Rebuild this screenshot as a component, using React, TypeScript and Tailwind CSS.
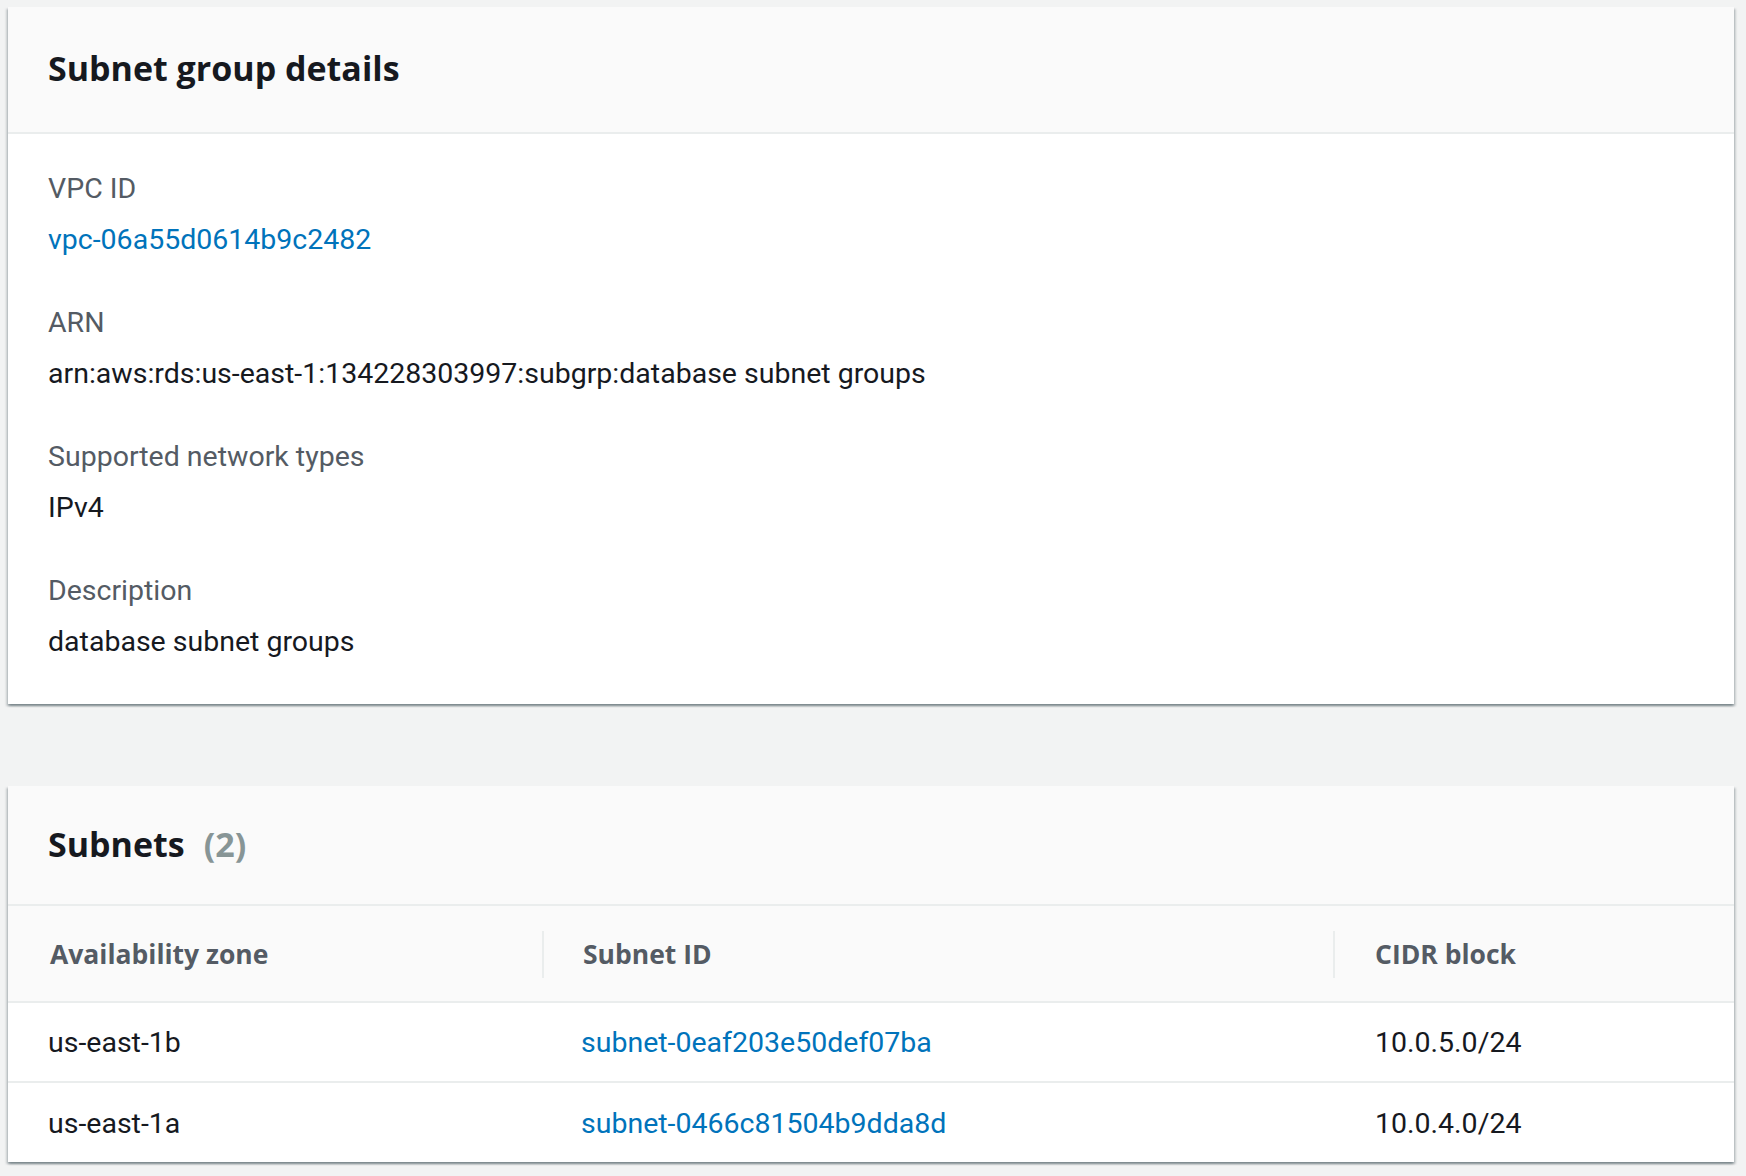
import React from "react";

const font = { fontFamily: "Roboto, 'Liberation Sans', sans-serif" };
const heading = { fontFamily: "'Open Sans', Roboto, sans-serif" };

const details = [
  { label: "VPC ID", value: "vpc-06a55d0614b9c2482", link: true },
  { label: "ARN", value: "arn:aws:rds:us-east-1:134228303997:subgrp:database subnet groups" },
  { label: "Supported network types", value: "IPv4" },
  { label: "Description", value: "database subnet groups" },
];

const subnets = [
  { zone: "us-east-1b", id: "subnet-0eaf203e50def07ba", cidr: "10.0.5.0/24" },
  { zone: "us-east-1a", id: "subnet-0466c81504b9dda8d", cidr: "10.0.4.0/24" },
];

const cardShadow =
  "shadow-[0_2px_2px_0_rgba(0,28,36,0.3),2px_2px_2px_0_rgba(0,28,36,0.15),-2px_2px_2px_0_rgba(0,28,36,0.15)]";

export default function App() {
  return (
    <div className="min-h-[1176px] bg-[#f2f3f3] pt-[7px] pl-[8px] pr-[12px]" style={font}>
      {/* details card */}
      <section className={`bg-white ${cardShadow}`}>
        <div className="bg-[#fafafa] border-b-2 border-[#eaeded] pl-[40px] pt-[41px] pb-[44px]">
          <h2 className="text-[34px] leading-[40px] font-bold text-[#16191f]" style={heading}>
            Subnet group details
          </h2>
        </div>
        <div className="pl-[40px] pt-[37px] pb-[44px] flex flex-col gap-[47px]">
          {details.map((d) => (
            <div key={d.label} className="flex flex-col gap-[15px]">
              <div className="text-[28.5px] leading-[36px] text-[#545b64]">{d.label}</div>
              <div className={`text-[28.5px] leading-[36px] ${d.link ? "text-[#0073bb]" : "text-[#16191f]"}`}>
                {d.value}
              </div>
            </div>
          ))}
        </div>
      </section>

      {/* subnets card */}
      <section className={`mt-[82px] bg-white ${cardShadow}`}>
        <div
          className="bg-[#fafafa] border-b-2 border-[#eaeded] pl-[40px] pt-[38px] pb-[40px] flex items-baseline gap-[19px]"
          style={heading}
        >
          <h2 className="text-[34px] leading-[40px] font-bold text-[#16191f]">Subnets</h2>
          <span className="text-[34px] leading-[40px] font-bold text-[#879596]">(2)</span>
        </div>

        <div
          className="grid grid-cols-[534px_791px_1fr] bg-[#fafafa] border-b-2 border-[#eaeded] h-[97px] pt-[2px] text-[26.5px] font-bold text-[#545b64]"
          style={heading}
        >
          <div className="flex items-center pl-[42px]">Availability zone</div>
          <div className="flex items-center">
            <span className="h-[47px] w-[2px] bg-[#eaeded]" />
            <span className="ml-[39px]">Subnet ID</span>
          </div>
          <div className="flex items-center">
            <span className="h-[47px] w-[2px] bg-[#eaeded]" />
            <span className="ml-[40px]">CIDR block</span>
          </div>
        </div>

        {subnets.map((s, i) => (
          <div
            key={s.id}
            className={`grid grid-cols-[534px_791px_1fr] pt-[3px] text-[28.5px] ${
              i < subnets.length - 1 ? "h-[80px] border-b-2 border-[#eaeded]" : "h-[79px]"
            }`}
          >
            <div className="flex items-center pl-[40px] text-[#16191f]">{s.zone}</div>
            <div className="flex items-center pl-[39px] text-[#0073bb]">{s.id}</div>
            <div className="flex items-center pl-[42px] text-[#16191f]">{s.cidr}</div>
          </div>
        ))}
      </section>
    </div>
  );
}
